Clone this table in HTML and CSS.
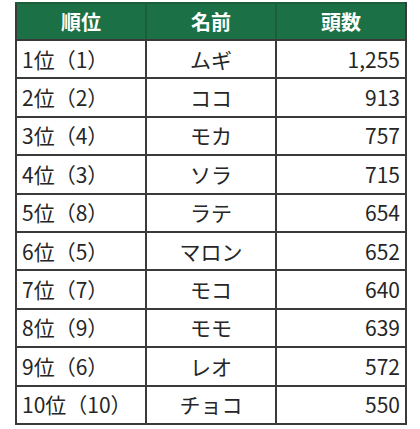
FILE: index.html
```html
<!DOCTYPE html>
<html lang="ja">
<head>
<meta charset="utf-8">
<link rel="stylesheet" href="styles.css">
</head>
<body>
<table class="rank">
  <colgroup>
    <col class="c"><col class="c"><col class="c">
  </colgroup>
  <thead>
    <tr><th>順位</th><th>名前</th><th>頭数</th></tr>
  </thead>
  <tbody>
    <tr><td class="pos">1位（1）</td><td class="name">ムギ</td><td class="num">1,255</td></tr>
    <tr><td class="pos">2位（2）</td><td class="name">ココ</td><td class="num">913</td></tr>
    <tr><td class="pos">3位（4）</td><td class="name">モカ</td><td class="num">757</td></tr>
    <tr><td class="pos">4位（3）</td><td class="name">ソラ</td><td class="num">715</td></tr>
    <tr><td class="pos">5位（8）</td><td class="name">ラテ</td><td class="num">654</td></tr>
    <tr><td class="pos">6位（5）</td><td class="name">マロン</td><td class="num">652</td></tr>
    <tr><td class="pos">7位（7）</td><td class="name">モコ</td><td class="num">640</td></tr>
    <tr><td class="pos">8位（9）</td><td class="name">モモ</td><td class="num">639</td></tr>
    <tr><td class="pos">9位（6）</td><td class="name">レオ</td><td class="num">572</td></tr>
    <tr><td class="pos">10位（10）</td><td class="name">チョコ</td><td class="num">550</td></tr>
  </tbody>
</table>
</body>
</html>
```

FILE: styles.css
```css
html, body {
  margin: 0;
  padding: 0;
  background: #ffffff;
}
body {
  padding: 2px 0 0 15px;
  font-family: "Noto Sans CJK JP", "Noto Sans", sans-serif;
  color: #262626;
}
.rank {
  border-collapse: collapse;
  table-layout: fixed;
  width: 392px;
}
.rank .c {
  width: 130px;
}
.rank th,
.rank td {
  border: 2px solid #3a3a3a;
  padding: 0 5px;
  line-height: 1;
  white-space: nowrap;
}
.rank thead tr {
  height: 37px;
}
.rank th {
  background: #1b7145;
  color: #ffffff;
  font-weight: 700;
  font-size: 20px;
  text-align: center;
  border-top-color: #1b5e3a;
  border-left-color: #1b5e3a;
  border-right-color: #1b5e3a;
}
.rank th:first-child {
  border-left-color: #3a3a3a;
}
.rank th:last-child {
  border-right-color: #3a3a3a;
}
.rank tbody tr {
  height: 38.4px;
}
.rank td {
  font-size: 21px;
}
.pos {
  text-align: left;
}
.name {
  text-align: center;
}
.num {
  text-align: right;
  padding-right: 12px;
}
```
